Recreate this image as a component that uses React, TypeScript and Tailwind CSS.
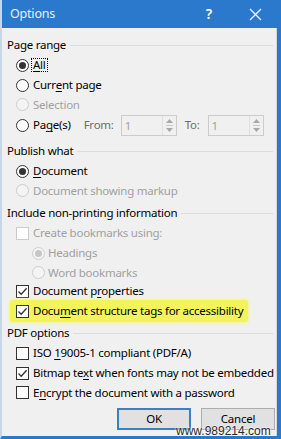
import clsx from "clsx"

const font = { fontFamily: '"Noto Sans", "Open Sans", sans-serif' }

function Radio({ checked, disabled }: { checked?: boolean; disabled?: boolean }) {
  return (
    <span
      className={clsx(
        "w-[13px] h-[13px] rounded-full border flex items-center justify-center shrink-0",
        disabled ? "border-[#cdcdcd] bg-[#f4f4f4]" : "border-[#333] bg-white"
      )}
    >
      {checked && (
        <span className={clsx("w-[7px] h-[7px] rounded-full", disabled ? "bg-[#c6c6c6]" : "bg-[#333]")} />
      )}
    </span>
  )
}

function Check({ checked, disabled }: { checked?: boolean; disabled?: boolean }) {
  return (
    <span
      className={clsx(
        "w-[13px] h-[13px] border flex items-center justify-center shrink-0 bg-white",
        disabled ? "border-[#cccccc]" : "border-[#333]"
      )}
    >
      {checked && (
        <svg width="11" height="11" viewBox="0 0 11 11">
          <path d="M1.5 5.5 L4.2 8.2 L9.6 2.2" fill="none" stroke="#333" strokeWidth="1.3" />
        </svg>
      )}
    </span>
  )
}

function Group({ label, className }: { label: string; className?: string }) {
  return (
    <div className={clsx("flex items-center gap-[4px] h-5 pl-[5px] pr-[3px]", className)}>
      <span className="text-black">{label}</span>
      <span className="flex-1 h-px bg-[#dcdcdc] mt-[1px]" />
    </div>
  )
}

function Spin({ x }: { x?: string }) {
  return (
    <div className={clsx("flex items-stretch h-[21px] w-[56px] border border-[#cccccc] bg-[#f0f0f0]", x)}>
      <span className="flex-1 pl-[3px] pt-[4px] text-[#a0a0a0]">1</span>
      <span className="w-[14px] flex flex-col items-center justify-center gap-[2px] border-l border-[#e0e0e0]">
        <svg width="7" height="4" viewBox="0 0 7 4">
          <path d="M0 4 L3.5 0 L7 4 Z" fill="#a8a8a8" />
        </svg>
        <span className="w-[7px] h-px bg-[#c8c8c8]" />
        <svg width="7" height="4" viewBox="0 0 7 4">
          <path d="M0 0 L3.5 4 L7 0 Z" fill="#a8a8a8" />
        </svg>
      </span>
    </div>
  )
}

const u = "underline underline-offset-[1.5px]"

export default function App() {
  return (
    <div
      className="relative w-[281px] h-[439px] bg-[#f0f0f0] text-[11.5px] tracking-[-0.25px] leading-none text-black whitespace-nowrap border-l-2 border-l-[#c7d7e8] border-r-[4px] border-r-[#2b79cc] border-b-[3px] border-b-[#2b79cc] overflow-hidden flex flex-col"
      style={font}
    >
      {/* title bar */}
      <div className="h-[28px] -ml-[2px] bg-[#2b79cc] flex items-center pl-[10px] text-[#e3f0fd] text-[12.5px] tracking-[-0.2px] shrink-0">
        <span>Options</span>
        <span className="ml-auto mr-[37px] text-white text-[14px] font-semibold">?</span>
        <svg width="13" height="13" viewBox="0 0 13 13" className="mr-[15px]">
          <path d="M1 1 L12 12 M12 1 L1 12" stroke="#f2f8ff" strokeWidth="1.4" />
        </svg>
      </div>

      <div className="flex flex-col flex-1 border-r border-[#d6d6d6]">
        <Group label="Page range" className="mt-[7px]" />
        <div className="flex items-center h-5 pl-[14px] gap-[3px]">
          <Radio checked />
          <span className="outline-1 outline-dotted outline-black px-[1px]">
            <span className={u}>A</span>ll
          </span>
        </div>
        <div className="flex items-center h-5 pl-[14px] gap-[4px]">
          <Radio />
          <span>
            Curr<span className={u}>e</span>nt page
          </span>
        </div>
        <div className="flex items-center h-[19px] pl-[14px] gap-[4px] text-[#a0a0a0]">
          <Radio disabled />
          <span>Selection</span>
        </div>
        <div className="flex items-center h-[22px] pl-[14px]">
          <Radio />
          <span className="ml-[4px]">
            Pa<span className={u}>g</span>e(s)
          </span>
          <span className="ml-[13px] text-[#6d6d6d]">From:</span>
          <Spin x="ml-[7px]" />
          <span className="ml-[8px] text-[#6d6d6d]">To:</span>
          <Spin x="ml-[8px]" />
        </div>

        <Group label="Publish what" className="mt-[5px]" />
        <div className="flex items-center h-5 pl-[14px] gap-[4px]">
          <Radio checked />
          <span>
            <span className={u}>D</span>ocument
          </span>
        </div>
        <div className="flex items-center h-[19px] pl-[14px] gap-[4px] text-[#a0a0a0]">
          <Radio disabled />
          <span>Document showing markup</span>
        </div>

        <Group label="Include non-printing information" className="mt-[3px]" />
        <div className="flex items-center h-5 pl-[14px] gap-[4px] text-[#a0a0a0]">
          <Check disabled />
          <span>Create bookmarks using:</span>
        </div>
        <div className="flex items-center h-5 pl-[30px] gap-[3px] text-[#a0a0a0]">
          <Radio checked disabled />
          <span>Headings</span>
        </div>
        <div className="flex items-center h-[19px] pl-[30px] gap-[3px] text-[#a0a0a0]">
          <Radio disabled />
          <span>Word bookmarks</span>
        </div>
        <div className="flex items-center h-[18px] pl-[14px] gap-[4px]">
          <Check checked />
          <span>
            Document p<span className={u}>r</span>operties
          </span>
        </div>
        <div className="flex items-center h-[22px] ml-[8px] mr-[28px] pl-[6px] gap-[4px] bg-[#f3f35c] rounded-[3px] shadow-[0_0_3px_1px_#f6f68a]">
          <Check checked />
          <span>
            Docu<span className={u}>m</span>ent structure tags for accessibility
          </span>
        </div>

        <Group label="PDF options" className="mt-[1px]" />
        <div className="flex items-center h-5 pl-[14px] gap-[4px]">
          <Check />
          <span>
            ISO <span className={u}>1</span>9005-1 compliant (PDF/A)
          </span>
        </div>
        <div className="flex items-center h-5 pl-[14px] gap-[4px]">
          <Check checked />
          <span>
            Bitmap te<span className={u}>x</span>t when fonts may not be embedded
          </span>
        </div>
        <div className="flex items-center h-[19px] pl-[14px] gap-[4px]">
          <Check />
          <span>
            E<span className={u}>n</span>crypt the document with a password
          </span>
        </div>

        <div className="flex justify-end gap-[10px] mt-[6px] pr-[1px]">
          <button className="w-[74px] h-[22px] bg-[#e1e1e1] border-2 border-[#3b80c4] flex items-center justify-center">
            OK
          </button>
          <button className="w-[74px] h-[22px] bg-[#e1e1e1] border border-[#adadad] flex items-center justify-center">
            Cancel
          </button>
        </div>
      </div>

      <span
        className="absolute left-[174px] top-[425px] text-[12px] tracking-normal text-[#2a2a2a]"
        style={{ fontFamily: '"Liberation Sans", sans-serif', textShadow: "0 0 2px #fff, 0 0 2px #fff" }}
      >
        www.989214.com
      </span>
    </div>
  )
}
